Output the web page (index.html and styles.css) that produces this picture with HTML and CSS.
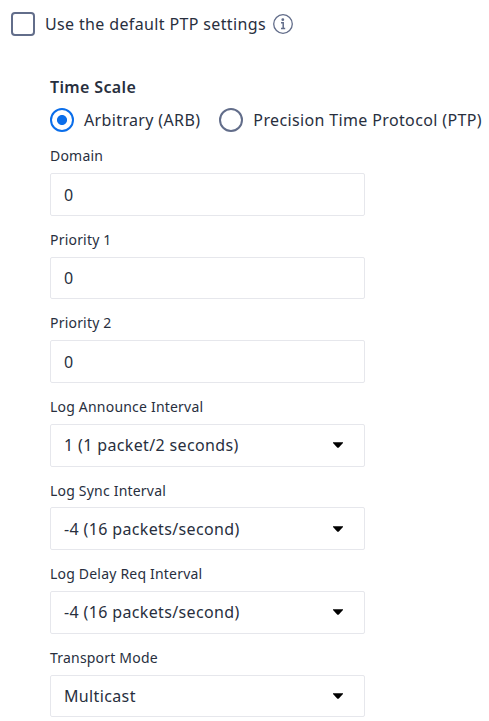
FILE: index.html
```html
<!DOCTYPE html>
<html lang="en">
<head>
    <meta charset="UTF-8">
    <meta name="viewport" content="width=device-width, initial-scale=1.0">
    <title>PTP Settings</title>
    <link rel="stylesheet" href="styles.css">
</head>
<body>
    <form class="ptp-form">
        <div class="default-row">
            <label class="option">
                <input type="checkbox" class="checkbox">
                <span>Use the default PTP settings</span>
            </label>
            <svg class="info-icon" width="20" height="20" viewBox="0 0 20 20">
                <circle cx="10" cy="10" r="9.3" fill="none" stroke="#626d8a" stroke-width="1.3"/>
                <circle cx="9.8" cy="5.7" r="1.4" fill="#626d8a"/>
                <path d="M8 8.8h2.2v5.4M8 14.4h4.2" fill="none" stroke="#626d8a" stroke-width="1.5"/>
            </svg>
        </div>

        <div class="settings">
            <div class="group-title">Time Scale</div>
            <div class="radio-row">
                <label class="option">
                    <input type="radio" class="radio" name="timescale" checked>
                    <span>Arbitrary (ARB)</span>
                </label>
                <label class="option">
                    <input type="radio" class="radio" name="timescale">
                    <span>Precision Time Protocol (PTP)</span>
                </label>
            </div>

            <div class="field">
                <label class="field-label" for="domain">Domain</label>
                <input type="text" class="control" id="domain" value="0">
            </div>
            <div class="field">
                <label class="field-label" for="priority1">Priority 1</label>
                <input type="text" class="control" id="priority1" value="0">
            </div>
            <div class="field">
                <label class="field-label" for="priority2">Priority 2</label>
                <input type="text" class="control" id="priority2" value="0">
            </div>
            <div class="field">
                <label class="field-label" for="announce">Log Announce Interval</label>
                <button type="button" class="control select" id="announce">
                    <span>1 (1 packet/2 seconds)</span>
                    <svg class="arrow" width="10" height="6" viewBox="0 0 10 6"><path d="M0 0.3h10v0.7L5.6 5.7H4.4L0 1z"/></svg>
                </button>
            </div>
            <div class="field">
                <label class="field-label" for="sync">Log Sync Interval</label>
                <button type="button" class="control select" id="sync">
                    <span>-4 (16 packets/second)</span>
                    <svg class="arrow" width="10" height="6" viewBox="0 0 10 6"><path d="M0 0.3h10v0.7L5.6 5.7H4.4L0 1z"/></svg>
                </button>
            </div>
            <div class="field">
                <label class="field-label" for="delay">Log Delay Req Interval</label>
                <button type="button" class="control select" id="delay">
                    <span>-4 (16 packets/second)</span>
                    <svg class="arrow" width="10" height="6" viewBox="0 0 10 6"><path d="M0 0.3h10v0.7L5.6 5.7H4.4L0 1z"/></svg>
                </button>
            </div>
            <div class="field">
                <label class="field-label" for="transport">Transport Mode</label>
                <button type="button" class="control select" id="transport">
                    <span>Multicast</span>
                    <svg class="arrow" width="10" height="6" viewBox="0 0 10 6"><path d="M0 0.3h10v0.7L5.6 5.7H4.4L0 1z"/></svg>
                </button>
            </div>
        </div>
    </form>
</body>
</html>
```
FILE: styles.css
```css
* {
    box-sizing: border-box;
}
body {
    margin: 0;
    background-color: #fff;
    color: #282f3e;
    font-family: "Noto Sans", sans-serif;
    font-size: 16px;
    line-height: 24px;
    letter-spacing: 0.36px;
    overflow: hidden;
}
.ptp-form {
    padding: 12px 0 0 11px;
}
.default-row {
    display: flex;
    align-items: center;
    gap: 7px;
}
.option {
    display: flex;
    align-items: center;
    gap: 10px;
    white-space: nowrap;
}
.checkbox,
.radio {
    appearance: none;
    flex: none;
    width: 24px;
    height: 24px;
    margin: 0;
    border: 2px solid #626d8a;
    background-color: #fff;
}
.checkbox {
    border-radius: 4px;
}
.radio {
    border-radius: 50%;
}
.radio:checked {
    border-color: #0b6eea;
    background: radial-gradient(circle, #0b6eea 4.6px, #fff 5.4px);
}
.info-icon {
    flex: none;
}
.settings {
    padding: 39px 0 0 39px;
}
.group-title {
    font-weight: 600;
}
.radio-row {
    display: flex;
    gap: 19px;
    margin: 9px 0 14px;
}
.field {
    width: 315px;
    height: 83.6px;
}
.field-label {
    display: block;
    height: 20px;
    margin-bottom: 7px;
    padding-top: 0.2px;
    font-size: 14px;
    line-height: 20px;
    letter-spacing: 0.2px;
}
.control {
    display: block;
    width: 315px;
    height: 42.75px;
    padding: 0.25px 13px 0;
    border: 1px solid #e6e7ec;
    border-radius: 2px;
    background-color: #fff;
    color: inherit;
    font: inherit;
    letter-spacing: inherit;
}
.select {
    display: flex;
    align-items: center;
    justify-content: space-between;
    padding: 0 21px 0 13px;
    text-align: left;
}
.arrow {
    fill: #000;
}
```
